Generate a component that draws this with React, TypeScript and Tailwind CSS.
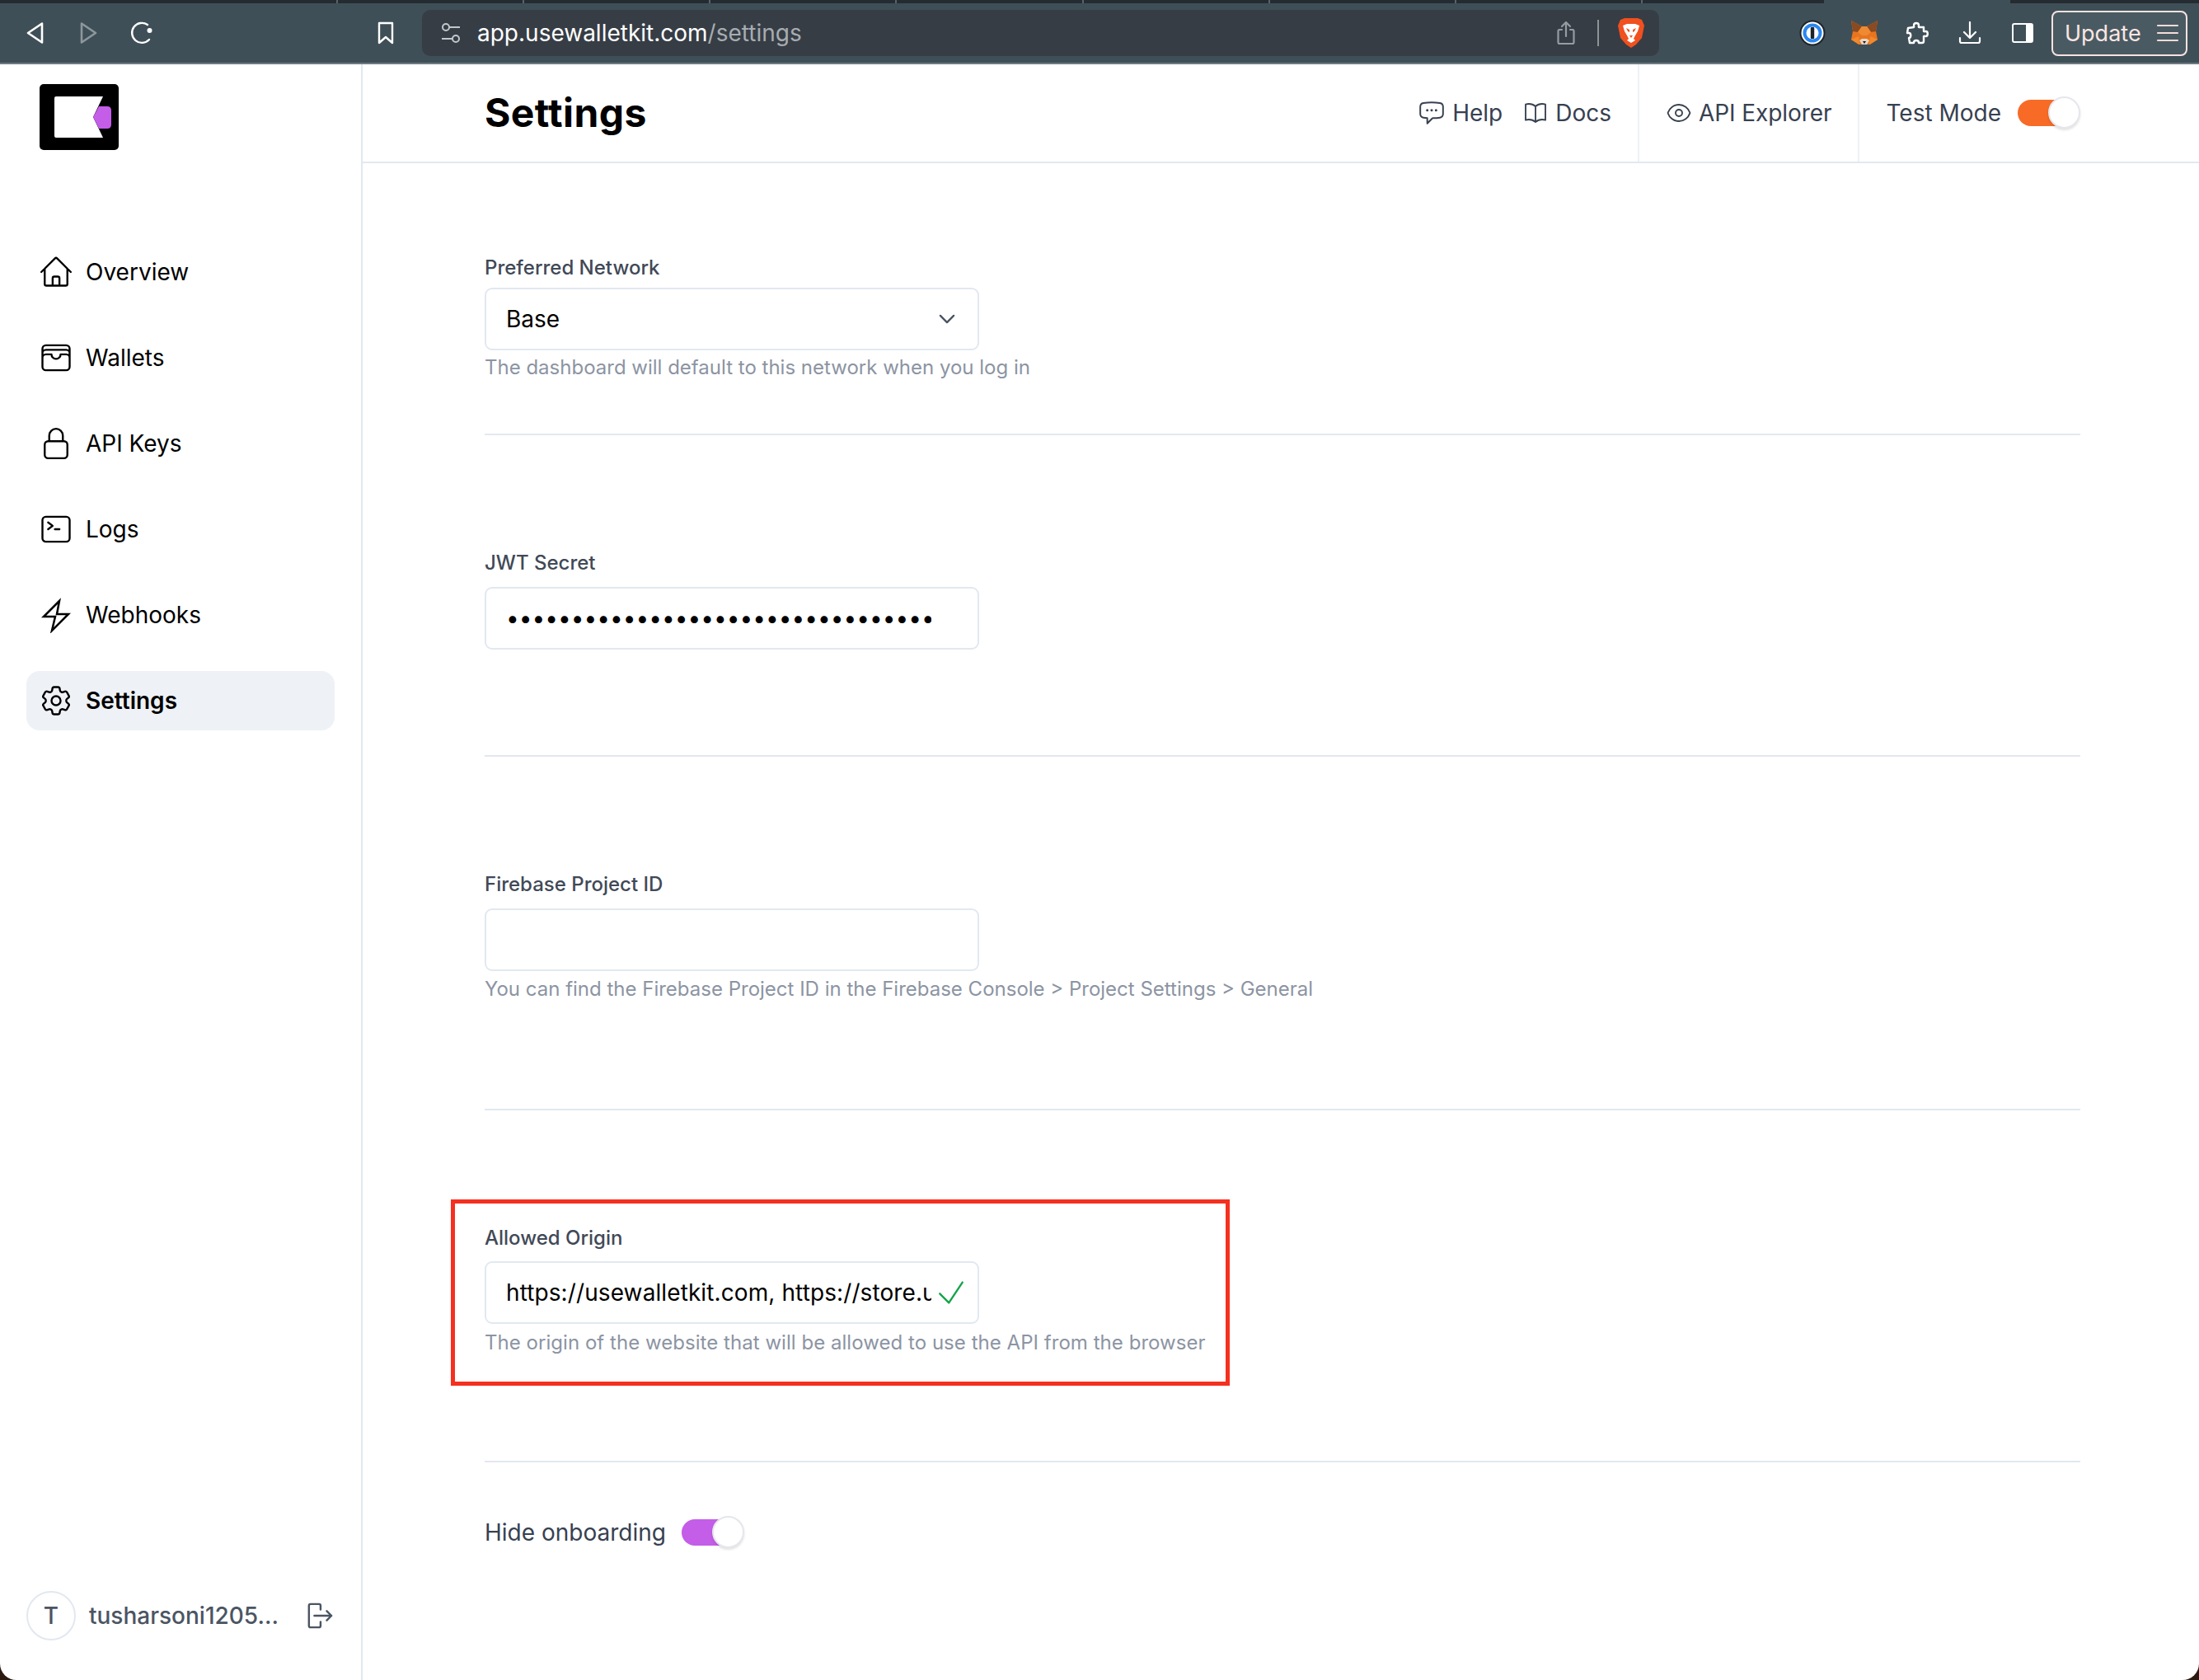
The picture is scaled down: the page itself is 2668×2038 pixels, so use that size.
import React from "react";
import {
  HiOutlineHome,
  HiOutlineWallet,
  HiOutlineLockClosed,
  HiOutlineCommandLine,
  HiOutlineCog6Tooth,
  HiOutlineChatBubbleLeftEllipsis,
  HiOutlineBookOpen,
  HiOutlineEye,
  HiOutlineChevronDown,
  HiOutlineCheck,
} from "react-icons/hi2";

const tabWidths = ["w-[410px]", "w-[226px]", "w-[226px]", "w-[226px]", "w-[227px]", "w-[226px]", "w-[226px]", "w-[226px]"];

function Back() {
  return (
    <svg width="22" height="28" viewBox="0 0 22 28" fill="none" stroke="#fff" strokeWidth="2.6" strokeLinejoin="round">
      <path d="M19 2.5 L2 14 L19 25.5 Z" />
    </svg>
  );
}
function Forward() {
  return (
    <svg width="22" height="28" viewBox="0 0 22 28" fill="none" stroke="#8c979c" strokeWidth="2.6" strokeLinejoin="round">
      <path d="M3 2.5 L20 14 L3 25.5 Z" />
    </svg>
  );
}
function Reload() {
  return (
    <svg width="28" height="28" viewBox="0 0 28 28" fill="none" stroke="#fff" strokeWidth="2.4" strokeLinecap="round">
      <path d="M23 22 A12 12 0 1 1 21 4" />
      <circle cx="23.5" cy="11" r="3" fill="#fff" stroke="none" />
    </svg>
  );
}
function Bookmark() {
  return (
    <svg width="20" height="28" viewBox="0 0 20 28" fill="none" stroke="#fff" strokeWidth="2.4" strokeLinejoin="round">
      <path d="M2 2 H18 V26 L10 19 L2 26 Z" />
    </svg>
  );
}
function Sliders() {
  return (
    <svg width="24" height="26" viewBox="0 0 24 26" fill="none" stroke="#c2c7cb" strokeWidth="2">
      <circle cx="6" cy="6" r="4" />
      <path d="M10 6 H23" />
      <circle cx="18" cy="20" r="4" />
      <path d="M14 20 H1" />
    </svg>
  );
}
function Share() {
  return (
    <svg width="22" height="30" viewBox="0 0 22 30" fill="none" stroke="#969ca1" strokeWidth="2.2" strokeLinecap="round" strokeLinejoin="round">
      <path d="M6 11 H3 Q1.5 11 1.5 13 V26 Q1.5 28 3 28 H19 Q20.5 28 20.5 26 V13 Q20.5 11 19 11 H16" />
      <path d="M11 19 V2 M6 7 L11 2 L16 7" />
    </svg>
  );
}
function Brave() {
  return (
    <svg width="32" height="38" viewBox="0 0 32 38">
      <path d="M8 1 H24 L29 3 L32 10 L29 25 L22 33 L16 37 L10 33 L3 25 L0 10 L3 3 Z" fill="#f1501f" />
      <path d="M6 10 L11 8 H21 L26 10 L24 17 L21 22 L19 26 L21 28 L16 31 L11 28 L13 26 L11 22 L8 17 Z" fill="#fff" />
      <path d="M10 13 L14 15 L14 18 L12 17 Z M22 13 L18 15 L18 18 L20 17 Z M14 22 H18 L16 25 Z" fill="#f1501f" />
    </svg>
  );
}
function OnePassword() {
  return (
    <svg width="32" height="32" viewBox="0 0 32 32">
      <circle cx="16" cy="16" r="15.5" fill="#1f2328" />
      <circle cx="16" cy="16" r="13.5" fill="#fff" />
      <circle cx="16" cy="16" r="11.5" fill="#2a86f0" />
      <circle cx="16" cy="16" r="7.5" fill="#fff" />
      <rect x="13.8" y="9" width="4.4" height="14" rx="1" fill="#1f2328" />
    </svg>
  );
}
function Fox() {
  return (
    <svg width="34" height="32" viewBox="0 0 34 32">
      <path d="M1 1 L14 8 H20 L33 1 L31 14 L33 24 L24 30 H10 L1 24 L3 14 Z" fill="#e8741f" />
      <path d="M1 1 L14 8 L9 15 L3 14 Z M33 1 L20 8 L25 15 L31 14 Z" fill="#8a4a22" />
      <path d="M9 15 L14 8 H20 L25 15 L20 19 H14 Z" fill="#ef8a32" />
      <path d="M1 24 L10 20 L11 30 Z M33 24 L24 20 L23 30 Z" fill="#f2892c" />
      <path d="M11 25 L14 23 H20 L23 25 L20 30 H14 Z" fill="#e5d5c5" />
      <path d="M15 26 H19 L17 29 Z" fill="#1d1a18" />
    </svg>
  );
}
function Puzzle() {
  return (
    <svg width="28" height="28" viewBox="0 0 28 28" fill="none" stroke="#fff" strokeWidth="2.4" strokeLinejoin="round">
      <path d="M10 5 C10 1 16 1 16 5 C16 6 15.5 6.5 16 7 L22 7 L22 12 C23 12.5 23.5 12 24.5 12 C27.5 12 27.5 18 24.5 18 C23.5 18 23 17.5 22 18 L22 24 Q22 26 20 26 L16 26 C16 22 10 22 10 26 L5 26 L4 20 C7 20 7 14 4 14 L2 14 L3 8 L10 7 C10.5 6.5 10 6 10 5 Z" />
    </svg>
  );
}
function Download() {
  return (
    <svg width="28" height="28" viewBox="0 0 28 28" fill="none" stroke="#fff" strokeWidth="2.2" strokeLinecap="round" strokeLinejoin="round">
      <path d="M14 1 V19 M7 13 L14 20 L21 13" />
      <path d="M2 20 V24 Q2 26 4 26 H24 Q26 26 26 24 V20" />
    </svg>
  );
}
function SidePanel() {
  return (
    <svg width="26" height="24" viewBox="0 0 26 24">
      <rect x="1" y="1" width="24" height="22" rx="2" fill="none" stroke="#fff" strokeWidth="2" />
      <rect x="17" y="1" width="8" height="22" fill="#fff" />
    </svg>
  );
}
function Logout() {
  return (
    <svg width="32" height="34" viewBox="0 0 34 34" fill="none" stroke="#4b5563" strokeWidth="2.6" strokeLinecap="round" strokeLinejoin="round">
      <path d="M18 9 V4 Q18 2 16 2 H5 Q3 2 3 4 V30 Q3 32 5 32 H16 Q18 32 18 30 V25" />
      <path d="M10 17 H32 M26 11 L32 17 L26 23" />
    </svg>
  );
}
function Logo() {
  return (
    <svg width="96" height="80" viewBox="0 0 96 80">
      <rect width="96" height="80" rx="5" fill="#000" />
      <path d="M18 17 Q18 15 20 15 H77 L65 40 L77 65 H20 Q18 65 18 63 Z" fill="#fff" />
      <path d="M65 40 L72 27 H82 Q87 27 87 32 V49 Q87 54 82 54 H72 Z" fill="#c45de8" />
    </svg>
  );
}
function Zap({ size = 44, className = "" }: { size?: number; strokeWidth?: number; className?: string }) {
  return (
    <svg width={size} height={size} viewBox="0 0 44 44" fill="none" stroke="currentColor" strokeWidth="2.5" strokeLinejoin="miter" className={className}>
      <path d="M26 5 L7 24 H21 L17 41 L37 21 H23 Z" />
    </svg>
  );
}

function Toggle({ on }: { on: "orange" | "purple" }) {
  return (
    <div className="flex items-center w-[76px] h-[40px] relative">
      <div className={`h-[32px] w-[56px] rounded-l-full ${on === "orange" ? "bg-[#f76b27]" : "bg-[#c45de8]"}`} />
      <div className="absolute right-0 top-0 w-[39px] h-[39px] rounded-full bg-white border-2 border-[#e5e7eb] shadow-[0_2px_3px_rgba(0,0,0,0.12)]" />
    </div>
  );
}

const nav = [
  { label: "Overview", Icon: HiOutlineHome },
  { label: "Wallets", Icon: HiOutlineWallet },
  { label: "API Keys", Icon: HiOutlineLockClosed },
  { label: "Logs", Icon: HiOutlineCommandLine },
  { label: "Webhooks", Icon: Zap },
  { label: "Settings", Icon: HiOutlineCog6Tooth, active: true },
];

const labelCls = "block text-[24px] leading-[32px] font-medium text-[#414957]";
const hintCls = "text-[24px] leading-[32px] text-[#8c94a3]";
const inputCls =
  "block w-[600px] h-[76px] rounded-[9px] border-2 border-[#e2e8f0] bg-white pl-[24px] pr-[56px] text-[28px] text-black outline-none";

export default function App() {
  return (
    <div
      className="w-[2668px] h-[2038px] overflow-hidden flex flex-col bg-[#2a1a10]"
      style={{ fontFamily: "Inter, 'Liberation Sans', sans-serif" }}
    >
      {/* browser chrome */}
      <div className="flex h-[4px] shrink-0 bg-[#242c31]">
        {tabWidths.map((w, i) => (
          <div key={i} className={`${w} h-full border-r-2 border-[#56636a]`} />
        ))}
        <div className="w-[220px] h-full" />
        <div className="w-[226px] h-full bg-[#3f4f57]" />
      </div>
      <div className="h-[74px] shrink-0 bg-[#3f4f57] border-b-2 border-[#6e7a80] flex items-center text-white">
        <div className="ml-[32px] flex items-center"><Back /></div>
        <div className="ml-[42px] flex items-center"><Forward /></div>
        <div className="ml-[40px] flex items-center"><Reload /></div>
        <div className="ml-[272px] flex items-center"><Bookmark /></div>
        <div className="ml-[34px] w-[1501px] h-[56px] rounded-[10px] bg-[#363d45] flex items-center">
          <div className="ml-[23px] flex"><Sliders /></div>
          <div className="ml-[20px] text-[28px] leading-none">
            app.usewalletkit.com<span className="text-[#a7acb1]">/settings</span>
          </div>
          <div className="ml-auto flex items-center">
            <Share />
            <div className="ml-[27px] w-[2px] h-[32px] bg-[#8e9398]" />
            <div className="ml-[23px] mr-[18px] flex"><Brave /></div>
          </div>
        </div>
        <div className="ml-[170px] flex"><OnePassword /></div>
        <div className="ml-[30px] flex"><Fox /></div>
        <div className="ml-[33px] flex"><Puzzle /></div>
        <div className="ml-[36px] flex"><Download /></div>
        <div className="ml-[37px] flex"><SidePanel /></div>
        <div className="ml-[22px] w-[165px] h-[55px] rounded-[8px] border-2 border-[#f7e3e0] bg-[#4a5a62] flex items-center pl-[14px] text-[#f9e6e3]">
          <span className="text-[27px] leading-none">Update</span>
          <svg className="ml-[18px]" width="28" height="22" viewBox="0 0 28 22" stroke="#f3dcd8" strokeWidth="2.2" strokeLinecap="round">
            <path d="M2 2 H26 M2 11 H26 M2 20 H26" />
          </svg>
        </div>
      </div>

      {/* page */}
      <div className="flex-1 flex rounded-b-[20px] overflow-hidden bg-white">
        <aside className="w-[440px] shrink-0 border-r-2 border-[#e2e8f0] flex flex-col justify-between">
          <div>
            <div className="ml-[48px] mt-[24px] flex"><Logo /></div>
            <nav className="mt-[112px] mx-[32px] flex flex-col gap-[32px]">
              {nav.map(({ label, Icon, active }) => (
                <div
                  key={label}
                  className={`h-[72px] flex items-center pl-[14px] rounded-[16px] text-[28px] text-black ${
                    active ? "bg-[#eef1f6] font-semibold" : "font-normal"
                  }`}
                >
                  <Icon size={44} strokeWidth={1.3} className="shrink-0" />
                  <span className="ml-[14px]">{label}</span>
                </div>
              ))}
            </nav>
          </div>
          <div className="flex items-center pl-[32px] mb-[48px]">
            <div className="w-[60px] h-[60px] rounded-full border-2 border-[#e2e8f0] flex items-center justify-center text-[28px] font-medium text-[#4b5563]">
              T
            </div>
            <span className="ml-[16px] text-[28px] font-medium text-[#4b5563]">tusharsoni1205...</span>
            <div className="ml-[34px] flex"><Logout /></div>
          </div>
        </aside>

        <main className="flex-1 min-w-0 flex flex-col">
          <header className="h-[120px] shrink-0 border-b-2 border-[#e2e8f0] flex items-stretch pl-[148px] pr-[144px]">
            <h1 className="self-center text-[48px] font-bold text-black leading-none tracking-[0.4px]">Settings</h1>
            <div className="ml-auto flex items-stretch text-[28px] text-[#374151]">
              <div className="flex items-center pr-[32px]">
                <HiOutlineChatBubbleLeftEllipsis size={34} strokeWidth={1.4} />
                <span className="ml-[8px]">Help</span>
                <HiOutlineBookOpen size={32} strokeWidth={1.4} className="ml-[24px]" />
                <span className="ml-[8px]">Docs</span>
              </div>
              <div className="flex items-center px-[32px] border-x-2 border-[#eef1f6]">
                <HiOutlineEye size={32} strokeWidth={1.4} />
                <span className="ml-[8px] tracking-[-0.08px]">API Explorer</span>
              </div>
              <div className="flex items-center pl-[32px]">
                <span className="mr-[20px]">Test Mode</span>
                <Toggle on="orange" />
              </div>
            </div>
          </header>

          <div className="pl-[148px] pr-[144px]">
            <section className="pt-[111px] pb-[64px] border-b-2 border-[#e2e8f0]">
              <label className={labelCls}>Preferred Network</label>
              <div className="mt-[8px] relative w-[600px] h-[76px] rounded-[9px] border-2 border-[#e2e8f0] flex items-center pl-[24px] text-[28px] text-black">
                Base
                <HiOutlineChevronDown size={26} strokeWidth={2.2} className="absolute right-[24px] top-[23px] text-[#4b5563]" />
              </div>
              <p className={`mt-[5px] ${hintCls}`}>The dashboard will default to this network when you log in</p>
            </section>

            <section className="pt-[139px] pb-[128px] border-b-2 border-[#e2e8f0]">
              <label className={labelCls}>JWT Secret</label>
              <input
                type="password"
                readOnly
                value="aaaaaaaaaaaaaaaaaaaaaaaaaaaaaaaaa"
                className={`mt-[13px] ${inputCls}`}
              />
            </section>

            <section className="pt-[139px] pb-[129px] border-b-2 border-[#e2e8f0]">
              <label className={labelCls}>Firebase Project ID</label>
              <input readOnly value="" className={`mt-[13px] ${inputCls}`} />
              <p className={`mt-[6px] ${hintCls}`}>
                You can find the Firebase Project ID in the Firebase Console &gt; Project Settings &gt; General
              </p>
            </section>

            <section className="pt-[139px] pb-[127px] border-b-2 border-[#e2e8f0] relative">
              <label className={labelCls}>Allowed Origin</label>
              <div className="relative mt-[12px] w-[600px]">
                <input
                  readOnly
                  value="https://usewalletkit.com, https://store.usewalletkit.com"
                  className={`${inputCls} tracking-[0.1px]`}
                />
                <HiOutlineCheck size={44} strokeWidth={1.3} className="absolute right-[12px] top-[16px] text-[#16a34a]" />
              </div>
              <p className={`mt-[7px] tracking-[0.04px] ${hintCls}`}>
                The origin of the website that will be allowed to use the API from the browser
              </p>
              <div className="absolute left-[-41px] top-[108px] w-[945px] h-[226px] border-[5px] border-[#f5301f] pointer-events-none" />
            </section>

            <div className="mt-[64px] flex items-center">
              <span className="text-[28px] text-[#374151]">Hide onboarding</span>
              <div className="ml-[19px]"><Toggle on="purple" /></div>
            </div>
          </div>
        </main>
      </div>
    </div>
  );
}
